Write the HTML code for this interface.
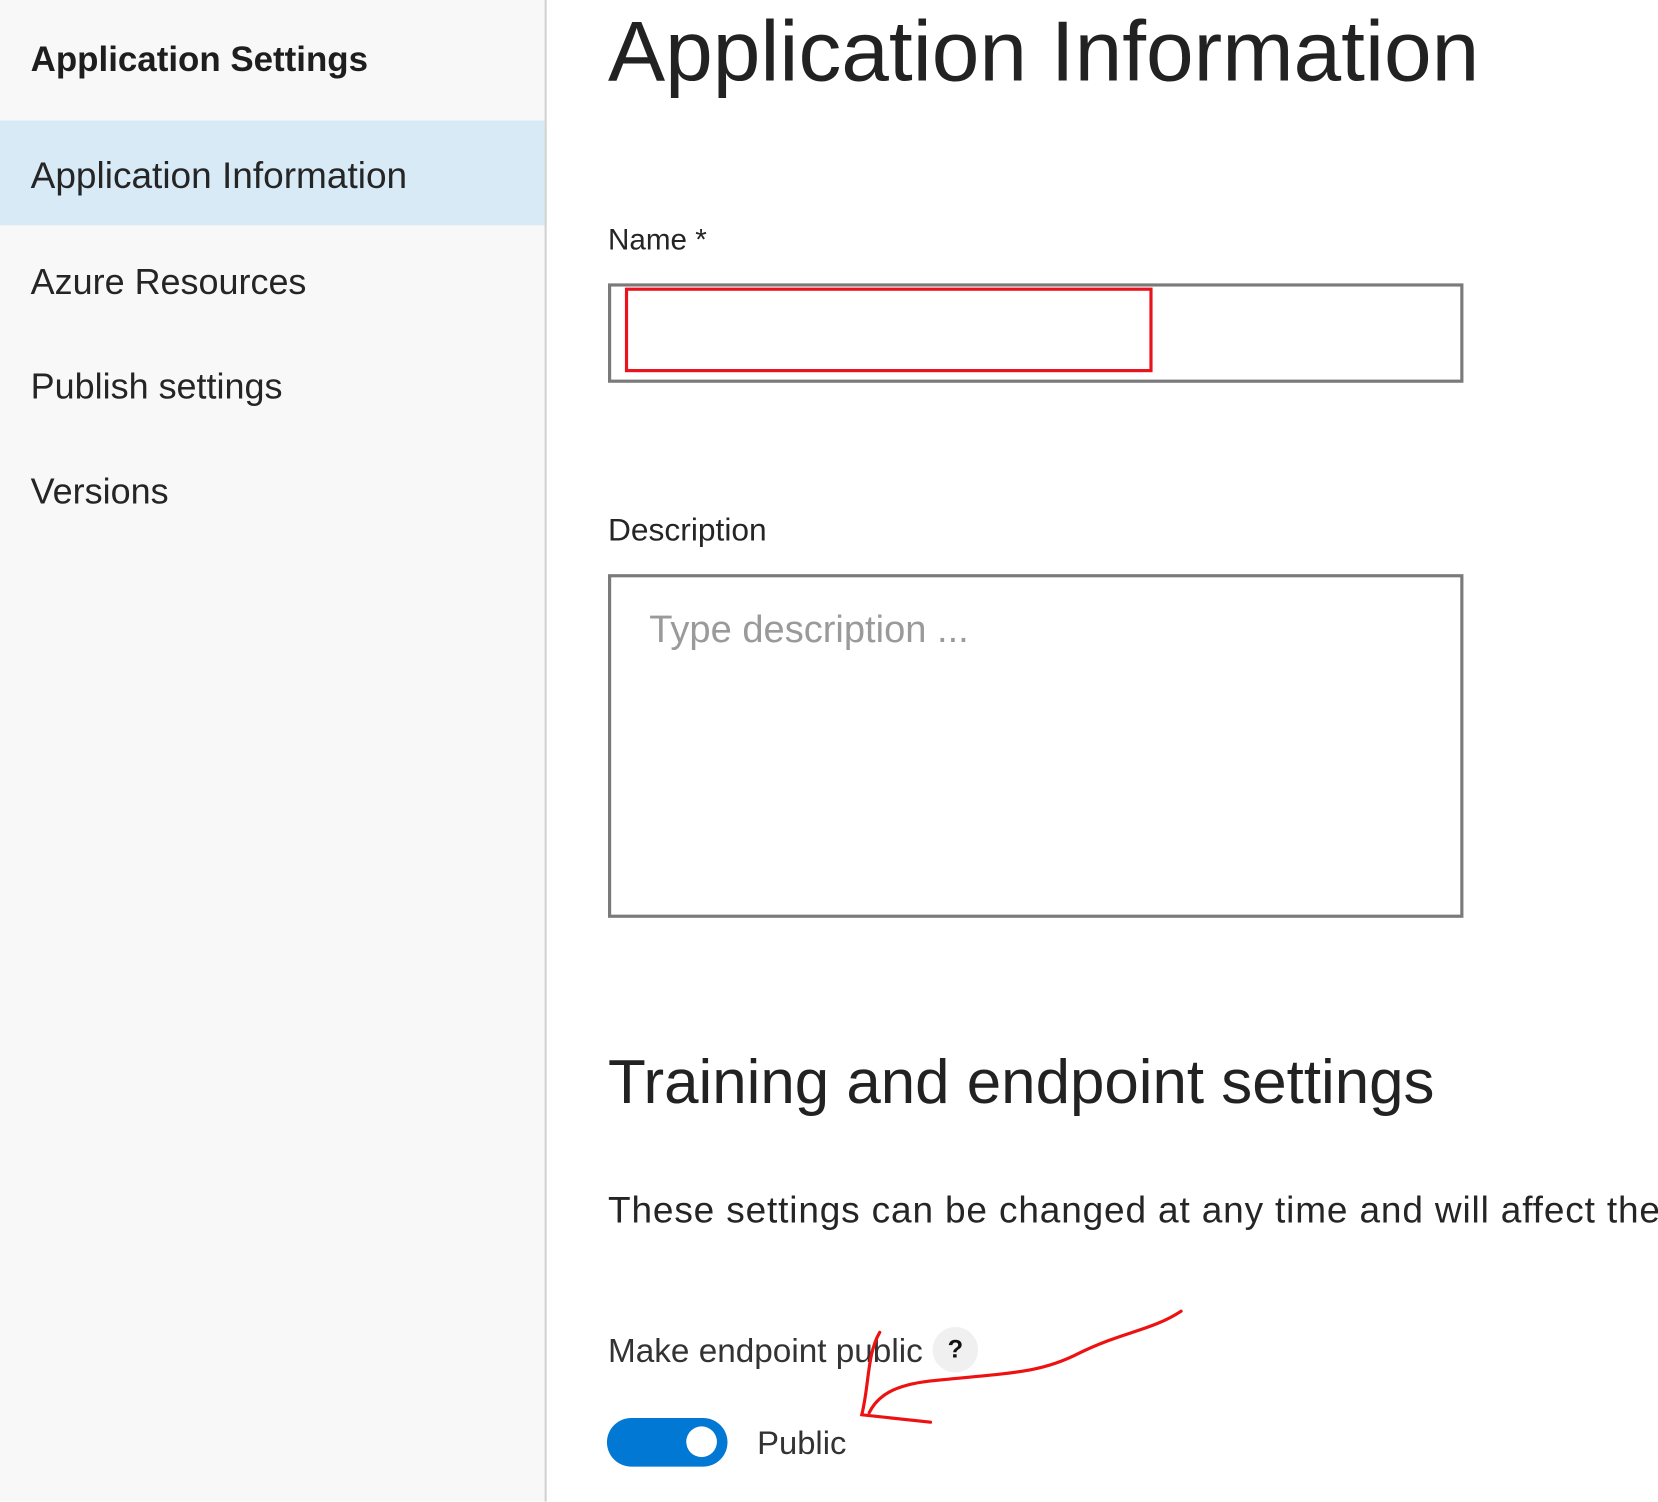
<!DOCTYPE html>
<html><head><meta charset="utf-8"><style>
html,body{margin:0;padding:0;width:1658px;height:1460px;overflow:hidden;background:#fff}
#w{position:absolute;left:0;top:0;width:1568px;height:1381px;transform:scale(1.05740);transform-origin:0 0;font-family:"Liberation Sans",sans-serif;color:#252525}
.t{position:absolute;line-height:1;white-space:nowrap}
</style></head><body><div id="w">
<div style="position:absolute;left:0;top:0;width:515px;height:1420px;background:#f8f8f8;border-right:2px solid #d2d2d2"></div>
<div style="position:absolute;left:0;top:114px;width:515px;height:99px;background:#d7eaf6"></div>
<div class="t" style="left:29px;top:39px;font-size:33px;font-weight:bold;color:#1e1e1e">Application Settings</div>
<div class="t" style="left:29px;top:149px;font-size:35px">Application Information</div>
<div class="t" style="left:29px;top:250px;font-size:34px">Azure Resources</div>
<div class="t" style="left:29px;top:349px;font-size:34px">Publish settings</div>
<div class="t" style="left:29px;top:448px;font-size:34px">Versions</div>

<div class="t" style="left:575px;top:9px;font-size:81px;color:#222">Application Information</div>
<div class="t" style="left:575px;top:213px;font-size:28px">Name *</div>
<div style="position:absolute;left:575px;top:268px;width:803px;height:88px;border:3px solid #7a7a7a;background:#fff"></div>
<div style="position:absolute;left:591px;top:272px;width:493px;height:74px;border:3px solid #e8131d"></div>
<div class="t" style="left:575px;top:487px;font-size:30px">Description</div>
<div style="position:absolute;left:575px;top:543px;width:803px;height:319px;border:3px solid #7a7a7a;background:#fff"></div>
<div class="t" style="left:614px;top:577px;font-size:36px;color:#9a9a9a">Type description ...</div>
<div class="t" style="left:575px;top:995px;font-size:58.5px;color:#222">Training and endpoint settings</div>
<div class="t" style="left:575px;top:1127px;font-size:35px;letter-spacing:0.8px">These settings can be changed at any time and will affect the</div>
<div class="t" style="left:575px;top:1262px;font-size:31.5px;color:#333">Make endpoint public</div>
<div style="position:absolute;left:882px;top:1255px;width:43px;height:43px;border-radius:50%;background:#f0f0f0;text-align:center;line-height:43px;font-size:24px;font-weight:bold;color:#111">?</div>
<div style="position:absolute;left:574px;top:1341px;width:114px;height:46px;border-radius:23px;background:#0078d4"></div>
<div style="position:absolute;left:649px;top:1349px;width:29px;height:29px;border-radius:50%;background:#fff"></div>
<div class="t" style="left:716px;top:1349px;font-size:31px;color:#333">Public</div>
<svg style="position:absolute;left:0;top:0" width="1568" height="1381" viewBox="0 0 1568 1381" fill="none" stroke="#ee1111" stroke-width="3" stroke-linecap="round">
<path d="M1117 1240 C1090 1258 1060 1260 1020 1280 C985 1298 960 1298 880 1306 C845 1310 830 1320 822 1336"/>
<path d="M832 1260 C820 1280 822 1310 815 1338 L880 1345"/>
</svg>
</div></body></html>
